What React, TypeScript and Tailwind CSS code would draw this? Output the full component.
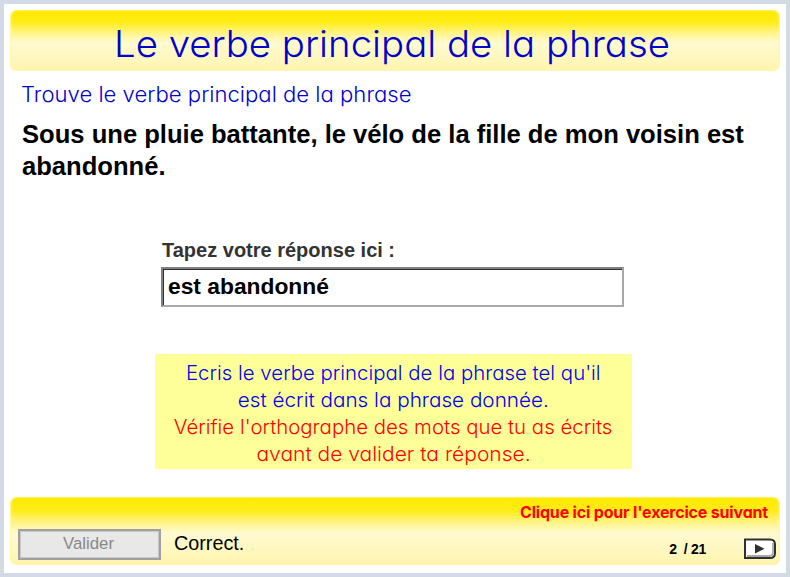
const gothic = "font-['Inter','Century_Gothic',sans-serif] [font-feature-settings:'cv11'] whitespace-nowrap";
const arial = "font-['Liberation_Sans',Arial,sans-serif] whitespace-nowrap";
const band =
  'rounded-[7px] bg-[linear-gradient(to_bottom,#ffe900_0%,#ffec18_20%,#fff48a_38%,#fffad0_54%,#fff7bf_78%,#fff4ac_100%)] shadow-[inset_1px_0_2px_#fff6b0,inset_-1px_0_2px_#fff6b0,0_0_1px_#fff6b0]';

function NextIcon() {
  return (
    <svg width="34" height="22" viewBox="0 0 34 22" className="block">
      <path d="M2 1.5H27Q32 1.5 32 6.5V15Q32 20 27 20H2Z" fill="#fff" stroke="#303030" strokeWidth="2" />
      <path d="M4 18H26Q30 18 30 14V5" fill="none" stroke="#a8a8a8" strokeWidth="1.8" />
      <path d="M12 6L21.5 10.7L12 15.4Z" fill="#303030" />
    </svg>
  );
}

export default function App() {
  return (
    <div className="flex h-[577px] w-[790px] flex-col overflow-hidden border-4 border-[#d3dae6] bg-white px-1.5 pt-1.5">
      <header className={`flex h-[61px] w-[770px] shrink-0 items-center pl-[104px] pt-[7px] ${band}`}>
        <h1 className={`${gothic} origin-left scale-x-[1.037] text-[37px] leading-[44px] font-[360] text-[#0000cc]`}>
          Le verbe principal de la phrase
        </h1>
      </header>
      <main className="flex h-[426px] shrink-0 flex-col">
        <p className={`${gothic} mt-[11px] ml-[11px] origin-left scale-x-[1.053] text-[21px] leading-[26px] font-[360] text-[#0000cc]`}>
          Trouve le verbe principal de la phrase
        </p>
        <p className={`${arial} mt-[10px] ml-3 text-[25.6px] leading-[32px] font-bold tracking-[-0.01px] text-black`}>
          Sous une pluie battante, le vélo de la fille de mon voisin est
          <br />
          abandonné.
        </p>
        <label className={`${arial} mt-[56px] ml-[152px] text-[20px] leading-[24px] font-bold text-[#333]`}>
          Tapez votre réponse ici :
        </label>
        <div className="mt-[5px] ml-[151px] h-10 w-[463px] border-2 border-t-[#808080] border-r-[#a8a8a8] border-b-[#a8a8a8] border-l-[#808080]">
          <div className={`${arial} h-full border-t border-l border-[#303030] pl-1 text-[22.8px] leading-[33px] font-bold text-black`}>
            est abandonné
          </div>
        </div>
        <div className={`${gothic} mt-[47px] ml-[145px] flex h-[115px] w-[477px] flex-col items-center pt-[6px] text-[20px] leading-[27px] font-[360] text-[#0000ee] bg-[#ffff99]`}>
          <span className="scale-x-[1.02]">Ecris le verbe principal de la phrase tel qu'il</span>
          <span className="scale-x-[1.035]">est écrit dans la phrase donnée.</span>
          <span className="scale-x-[1.02] text-[#ff0000]">Vérifie l'orthographe des mots que tu as écrits</span>
          <span className="scale-x-[1.05] text-[#ff0000]">avant de valider ta réponse.</span>
        </div>
      </main>
      <footer className={`h-[68px] w-[770px] shrink-0 pr-3 pl-2 ${band}`}>
        <div className={`${gothic} flex h-[30px] items-center justify-end text-[16px] font-bold tracking-[-0.18px] text-[#ff0000]`}>
          Clique ici pour l'exercice suivant
        </div>
        <div className="mt-[2px] flex h-[31px] items-center">
          <button className={`${arial} h-[31px] w-[143px] border-2 border-[#a0a0a0] bg-[#e8e8e8] pr-0.5 pb-0.5 text-[16.8px] leading-[20px] text-[#888] shadow-[inset_0_0_0_1px_#c8c8c8]`}>
            Valider
          </button>
          <span className={`${arial} ml-[13px] pb-[3px] text-[19.8px] leading-[24px] text-black`}>Correct.</span>
          <span className={`${arial} ml-auto pt-[8px] text-[14px] leading-[16px] font-bold tracking-[-0.3px] text-black`}>2&nbsp; / 21</span>
          <button className="mt-[8px] mr-[-9px] ml-[37px]" aria-label="Exercice suivant">
            <NextIcon />
          </button>
        </div>
      </footer>
    </div>
  );
}
